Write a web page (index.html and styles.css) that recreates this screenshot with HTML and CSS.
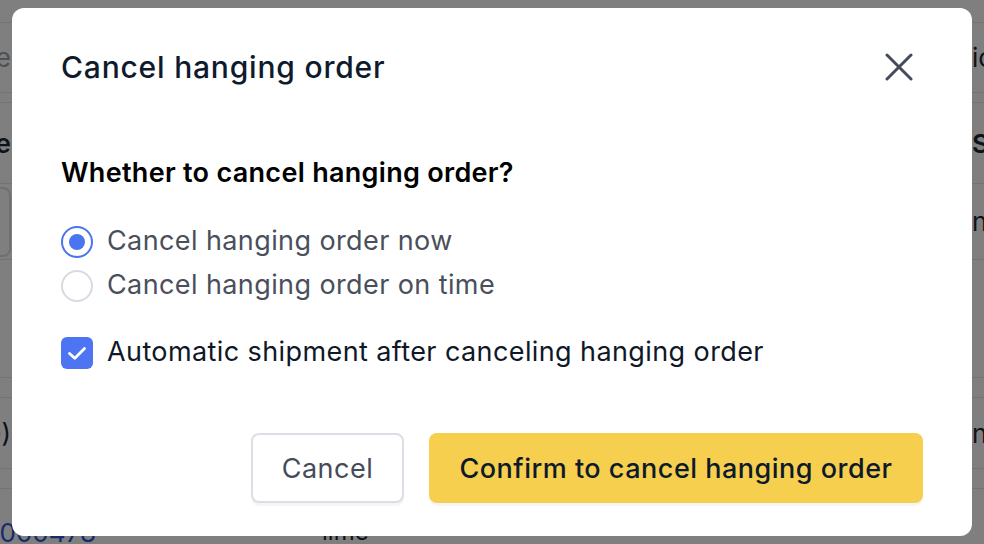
FILE: index.html
```html
<!DOCTYPE html>
<html>
<head>
    <title>Cancel hanging order</title>
    <link rel="stylesheet" href="styles.css">
</head>
<body>
    <div class="page">
        <div class="row row-top"></div>
        <div class="row row-a">
            <div class="cell-left muted">Name</div>
            <div class="cell-right">ice</div>
        </div>
        <div class="row row-gap"></div>
        <div class="row row-b">
            <div class="cell-left strong">Type</div>
            <div class="cell-right">Sta</div>
        </div>
        <div class="row row-c">
            <div class="cell-left"><span class="fake-input"></span></div>
            <div class="cell-right">n</div>
        </div>
        <div class="row row-d"></div>
        <div class="row row-e"></div>
        <div class="row row-f">
            <div class="cell-left">(0)</div>
            <div class="cell-right">nc</div>
        </div>
        <div class="row row-g"></div>
        <div class="row row-h">
            <div class="cell-link">2000478</div>
            <div class="cell-mid">lime</div>
        </div>
    </div>

    <div class="overlay">
        <div class="modal">
            <div class="modal-header">
                <div class="modal-title">Cancel hanging order</div>
                <button class="close-btn" aria-label="Close">
                    <svg width="28" height="28" viewBox="0 0 28 28">
                        <path d="M2 2 L26 26 M26 2 L2 26" stroke="#454b59" stroke-width="3" stroke-linecap="round" fill="none"/>
                    </svg>
                </button>
            </div>

            <div class="question">Whether to cancel hanging order?</div>

            <div class="options">
                <label class="option">
                    <span class="radio checked"><span class="dot"></span></span>
                    <span class="option-text">Cancel hanging order now</span>
                </label>
                <label class="option">
                    <span class="radio"></span>
                    <span class="option-text">Cancel hanging order on time</span>
                </label>
            </div>

            <label class="option check-row">
                <span class="checkbox">
                    <svg width="24" height="24" viewBox="0 0 24 24">
                        <path d="M4.5 12.5 L9.8 17.3 L19.5 7.5" stroke="#fff" stroke-width="2.8" stroke-linecap="round" stroke-linejoin="round" fill="none"/>
                    </svg>
                </span>
                <span class="check-text">Automatic shipment after canceling hanging order</span>
            </label>

            <div class="modal-footer">
                <button class="btn btn-cancel">Cancel</button>
                <button class="btn btn-confirm">Confirm to cancel hanging order</button>
            </div>
        </div>
    </div>
</body>
</html>
```

FILE: styles.css
```css
body {
    margin: 0;
    font-family: Inter, 'Liberation Sans', Arial, sans-serif;
    background-color: #fff;
    color: #1d2433;
    width: 984px;
    height: 544px;
    overflow: hidden;
}

/* page behind the dialog */
.page {
    display: flex;
    flex-direction: column;
}

.row {
    display: flex;
    align-items: center;
    justify-content: space-between;
    border-bottom: 1px solid #e6e6e6;
    box-sizing: border-box;
    font-size: 26px;
}

.row-top { height: 23px; }
.row-a { height: 70px; }
.row-gap { height: 10px; }
.row-b { height: 81px; font-weight: 600; }
.row-c { height: 76px; }
.row-d { height: 118px; }
.row-e { height: 20px; }
.row-f { height: 71px; }
.row-g { height: 20px; }
.row-h {
    height: 55px;
    border-bottom: none;
    align-items: flex-start;
    justify-content: flex-start;
    padding-top: 28px;
}

.cell-left {
    width: 11px;
    display: flex;
    justify-content: flex-end;
    overflow: hidden;
    white-space: nowrap;
}

.cell-right {
    width: 12px;
    overflow: hidden;
    white-space: nowrap;
    padding-left: 3px;
}

.cell-link {
    width: 96px;
    display: flex;
    justify-content: flex-end;
    overflow: hidden;
    white-space: nowrap;
    color: #2f54d6;
}

.cell-mid {
    margin-left: 226px;
    font-size: 24px;
}

.muted { color: #9aa0ab; }
.strong { font-weight: 600; }

.fake-input {
    display: block;
    flex: none;
    width: 60px;
    height: 66px;
    border: 2px solid #dedfe4;
    border-radius: 8px;
}

/* dialog */
.overlay {
    position: fixed;
    inset: 0;
    background-color: rgba(0, 0, 0, 0.5);
    display: flex;
    justify-content: center;
    align-items: center;
}

.modal {
    width: 960px;
    height: 528px;
    background-color: #fff;
    border-radius: 12px;
    box-sizing: border-box;
    padding: 43px 49px 33px 49px;
    display: flex;
    flex-direction: column;
}

.modal-header {
    display: flex;
    justify-content: space-between;
    align-items: center;
    height: 32px;
}

.modal-title {
    font-size: 30px;
    font-weight: 500;
    letter-spacing: 0.8px;
    color: #0e1b2c;
    line-height: 32px;
}

.close-btn {
    background: none;
    border: none;
    padding: 0;
    width: 28px;
    height: 28px;
    margin-right: 10px;
    cursor: pointer;
}

.question {
    margin-top: 74px;
    line-height: 32px;
    font-size: 27px;
    font-weight: 600;
    letter-spacing: 0.3px;
    color: #000;
}

.options {
    margin-top: 31px;
}

.option {
    display: flex;
    align-items: center;
    height: 44px;
    gap: 14px;
    cursor: pointer;
}

.option-text,
.check-text {
    font-size: 27px;
    letter-spacing: 0.4px;
    line-height: 32px;
    padding-bottom: 2px;
}

.option-text {
    color: #4a4f5c;
}

.check-text {
    color: #0f1829;
}

.radio {
    width: 32px;
    height: 32px;
    box-sizing: border-box;
    border: 2px solid #d8dae3;
    border-radius: 50%;
    display: flex;
    justify-content: center;
    align-items: center;
}

.radio.checked {
    border-color: #4a74f0;
}

.radio .dot {
    width: 16px;
    height: 16px;
    border-radius: 50%;
    background-color: #4a74f0;
}

.check-row {
    margin-top: 23px;
}

.checkbox {
    width: 32px;
    height: 32px;
    border-radius: 6px;
    background-color: #4c74f3;
    display: flex;
    justify-content: center;
    align-items: center;
}

.modal-footer {
    margin-top: auto;
    display: flex;
    justify-content: flex-end;
    gap: 25px;
}

.btn {
    height: 70px;
    border-radius: 8px;
    font-family: inherit;
    font-size: 27px;
    letter-spacing: 0.5px;
    box-shadow: 0 3px 0 rgba(0, 0, 0, 0.04);
    cursor: pointer;
}

.btn-cancel {
    width: 153px;
    background-color: #fff;
    border: 2px solid #dcdee6;
    color: #454b59;
}

.btn-confirm {
    width: 494px;
    background-color: #f6cf4e;
    border: none;
    color: #0d1a2b;
    font-weight: 500;
}
```
